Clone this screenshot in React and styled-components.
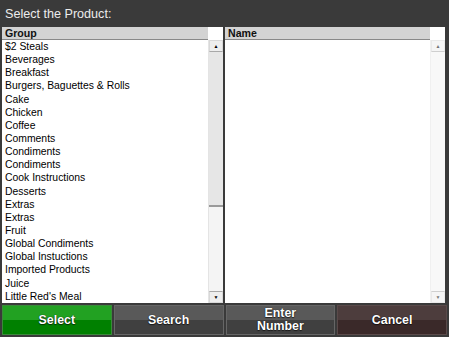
import React from "react";
import styled, { createGlobalStyle } from "styled-components";

const Global = createGlobalStyle`
  html, body { margin: 0; padding: 0; background: #3a3a3a; }
  body { font-family: "Liberation Sans", Arial, sans-serif; }
`;

const Page = styled.div`
  width: 449px;
  height: 337px;
  display: flex;
  flex-direction: column;
  background: #3a3a3a;
  box-sizing: border-box;
  overflow: hidden;
`;

const Title = styled.div`
  height: 27px;
  display: flex;
  align-items: center;
  padding-left: 5px;
  color: #ececec;
  font-size: 12.6px;
  flex: none;
`;

const Panels = styled.div`
  display: flex;
  gap: 2px;
  padding: 0 2px;
  height: 276px;
  flex: none;
`;

const Panel = styled.div`
  flex: ${(p) => p.$w}px 0 0;
  width: ${(p) => p.$w}px;
  background: #fff;
  display: grid;
  grid-template-columns: 1fr 15px;
  grid-template-rows: 13px 1fr;
  overflow: hidden;
`;

const Header = styled.div`
  background: #d3d3d3;
  font-weight: bold;
  font-size: 10.6px;
  color: #111;
  padding-left: 3px;
  line-height: 13px;
  border-bottom: 1px solid #888;
  box-sizing: border-box;
`;

const HeaderCorner = styled.div`
  background: #fff;
`;

const List = styled.div`
  display: flex;
  flex-direction: column;
  overflow: hidden;
`;

const Row = styled.div`
  height: 13.15px;
  line-height: 13px;
  font-size: 10.4px;
  color: #000;
  padding-left: 3px;
  white-space: nowrap;
  flex: none;
`;

const Scroll = styled.div`
  display: flex;
  flex-direction: column;
  background: #f5f5f5;
  border-left: 1px solid #e4e4e4;
  opacity: ${(p) => (p.$disabled ? 0.55 : 1)};
`;

const Arrow = styled.div`
  height: 12px;
  flex: none;
  background: #eeeeee;
  border: 1px solid #d8d8d8;
  border-${(p) => (p.$down ? "top" : "bottom")}: 1px solid #a8a8a8;
  box-sizing: border-box;
  display: flex;
  align-items: center;
  justify-content: center;
  font-size: 5px;
  color: #000;
  line-height: 1;
`;

const Thumb = styled.div`
  height: 155px;
  flex: none;
  background: #e6e6e6;
  border-bottom: 2px solid #9a9a9a;
  box-sizing: border-box;
`;

const Track = styled.div`
  flex: 1;
  background: #f4f4f4;
`;

const Buttons = styled.div`
  display: grid;
  grid-template-columns: repeat(4, 1fr);
  gap: 2px;
  padding: 2px 2px 2px 2px;
  flex: 1;
`;

const themes = {
  green: ["#22a122", "#008000", "#3a8a3a"],
  gray: ["#595959", "#404040", "#666"],
  red: ["#4d3d3d", "#3a2929", "#5a4a4a"],
};

const Btn = styled.button`
  border: 1px solid ${(p) => themes[p.$tone][2]};
  background: linear-gradient(
    to bottom,
    ${(p) => themes[p.$tone][0]} 0%,
    ${(p) => themes[p.$tone][0]} 50%,
    ${(p) => themes[p.$tone][1]} 50%,
    ${(p) => themes[p.$tone][1]} 100%
  );
  color: #fff;
  font-family: "Liberation Sans", Arial, sans-serif;
  font-weight: bold;
  font-size: 12.4px;
  line-height: 13px;
  text-shadow: 0 0 1px rgba(0, 0, 0, 0.9), 0 1px 1px rgba(0, 0, 0, 0.6);
  padding: 0;
  margin: 0;
  display: flex;
  align-items: center;
  justify-content: center;
  text-align: center;
`;

const groups = [
  "$2 Steals",
  "Beverages",
  "Breakfast",
  "Burgers, Baguettes & Rolls",
  "Cake",
  "Chicken",
  "Coffee",
  "Comments",
  "Condiments",
  "Condiments",
  "Cook Instructions",
  "Desserts",
  "Extras",
  "Extras",
  "Fruit",
  "Global Condiments",
  "Global Instuctions",
  "Imported Products",
  "Juice",
  "Little Red's Meal",
];

function ScrollBar({ disabled, thumb }) {
  return (
    <Scroll $disabled={disabled}>
      <Arrow>▲</Arrow>
      {thumb && <Thumb />}
      <Track />
      <Arrow $down>▼</Arrow>
    </Scroll>
  );
}

export default function App() {
  return (
    <Page>
      <Global />
      <Title>Select the Product:</Title>
      <Panels>
        <Panel $w={221}>
          <Header>Group</Header>
          <HeaderCorner />
          <List>
            {groups.map((g, i) => (
              <Row key={i}>{g}</Row>
            ))}
          </List>
          <ScrollBar thumb />
        </Panel>
        <Panel $w={220}>
          <Header>Name</Header>
          <HeaderCorner />
          <List />
          <ScrollBar disabled />
        </Panel>
      </Panels>
      <Buttons>
        <Btn $tone="green">Select</Btn>
        <Btn $tone="gray">Search</Btn>
        <Btn $tone="gray">
          Enter
          <br />
          Number
        </Btn>
        <Btn $tone="red">Cancel</Btn>
      </Buttons>
    </Page>
  );
}
